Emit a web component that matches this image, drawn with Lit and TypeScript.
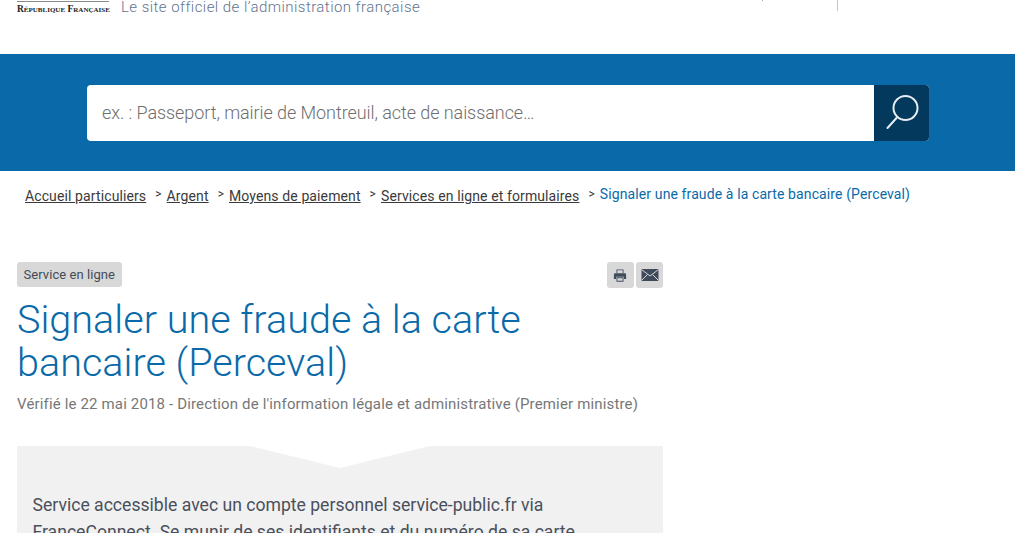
import { LitElement, html, css } from "lit";
import { customElement } from "lit/decorators.js";

@customElement("app-root")
export class AppRoot extends LitElement {
  static styles = css`
    :host {
      display: block;
      height: 533px;
      overflow: hidden;
      background: #fff;
      font-family: Roboto, "Liberation Sans", sans-serif;
    }
    .header {
      height: 54px;
      box-sizing: border-box;
      display: flex;
      padding-left: 17px;
      overflow: hidden;
    }
    .logo {
      width: 92px;
      height: 14px;
      border-top: 1px solid #8a8a8a;
      margin-top: 1px;
      font: 700 9.5px/14px "Liberation Serif", serif;
      font-variant: small-caps;
      color: #222;
      white-space: nowrap;
    }
    .tagline {
      margin-left: 12px;
      margin-top: -2px;
      font-weight: 300;
      font-size: 15px;
      line-height: 18px;
      letter-spacing: 0.45px;
      color: #62738f;
      white-space: nowrap;
    }
    .tick {
      position: absolute;
      left: 762px;
      top: 0;
      width: 1px;
      height: 1px;
      background: #a9a3cc;
    }
    .divider {
      position: absolute;
      left: 837px;
      top: 0;
      width: 1px;
      height: 11px;
      background: #c8c8c8;
    }
    .band {
      height: 117px;
      background: #0a6aa9;
      padding: 31px 86px 30px 87px;
      box-sizing: border-box;
    }
    .search {
      height: 56px;
      display: flex;
      background: #fff;
      border-radius: 4px;
      overflow: hidden;
    }
    .placeholder {
      flex: 1;
      padding-left: 15px;
      font-weight: 300;
      font-size: 18px;
      letter-spacing: -0.07px;
      line-height: 56px;
      color: #6e6e6e;
    }
    .go {
      width: 55px;
      background: #03395c;
      display: flex;
      align-items: center;
      justify-content: center;
    }
    .crumbs {
      display: flex;
      align-items: flex-start;
      padding: 15px 0 0 25px;
      height: 76px;
      box-sizing: border-box;
      font-size: 14px;
      letter-spacing: 0.11px;
      line-height: 20px;
      white-space: nowrap;
    }
    .crumbs a {
      color: #3a3a3a;
      text-decoration: underline;
    }
    .sep {
      font-size: 12px;
      color: #333;
      margin: -2px 5px 0 9px;
    }
    .current {
      color: #0a6aa9;
      margin-top: -2px;
    }
    .main {
      width: 646px;
      margin-left: 17px;
    }
    .top {
      display: flex;
      justify-content: space-between;
      align-items: flex-start;
      margin-top: 15px;
    }
    .tag {
      height: 25px;
      padding: 0 7px 0 6.5px;
      background: #d8d8d8;
      border-radius: 3px;
      font-size: 13px;
      letter-spacing: 0.06px;
      line-height: 25px;
      color: #444b57;
    }
    .actions {
      display: flex;
      gap: 2px;
    }
    .action {
      width: 27px;
      height: 26px;
      background: #d8d8d8;
      border-radius: 3px;
      display: flex;
      align-items: center;
      justify-content: center;
    }
    .print {
      box-sizing: border-box;
      padding-right: 1px;
    }
    h1 {
      margin: 10px 0 0;
      font-weight: 300;
      font-size: 39.6px;
      line-height: 43px;
      color: #0a6aa9;
      width: 560px;
    }
    .meta {
      margin-top: 10px;
      font-size: 15px;
      letter-spacing: 0.155px;
      line-height: 20px;
      color: #777;
      white-space: nowrap;
    }
    .box {
      position: relative;
      margin-top: 32px;
      height: 200px;
      background: #f1f1f1;
      padding: 46px 15px 0 15.5px;
      box-sizing: border-box;
      font-size: 17.6px;
      line-height: 27px;
      color: #4a505b;
    }
    .notch {
      position: absolute;
      left: 233px;
      top: 0;
    }
  `;

  render() {
    return html`
      <div class="header">
        <div class="logo">République Française</div>
        <div class="tagline">Le site officiel de l’administration française</div>
        <div class="tick"></div>
        <div class="divider"></div>
      </div>
      <div class="band">
        <div class="search">
          <div class="placeholder">ex. : Passeport, mairie de Montreuil, acte de naissance…</div>
          <div class="go">
            <svg width="34" height="36" viewBox="0 0 34 36" fill="none" stroke="#e6edf2" stroke-width="2" stroke-linecap="round">
              <circle cx="20.5" cy="13" r="12"></circle>
              <path d="M11.5 23 L2.5 33"></path>
            </svg>
          </div>
        </div>
      </div>
      <nav class="crumbs">
        <a>Accueil particuliers</a><span class="sep">&gt;</span>
        <a>Argent</a><span class="sep">&gt;</span>
        <a>Moyens de paiement</a><span class="sep">&gt;</span>
        <a>Services en ligne et formulaires</a><span class="sep">&gt;</span>
        <span class="current">Signaler une fraude à la carte bancaire (Perceval)</span>
      </nav>
      <div class="main">
        <div class="top">
          <div class="tag">Service en ligne</div>
          <div class="actions">
            <div class="action print">
              <svg width="14" height="15" viewBox="0 0 16 16" fill="#3f4a5c">
                <path d="M4 1h8v4H4z M5 2v3h6V2z" fill-rule="evenodd"></path>
                <path fill-rule="evenodd" d="M2.5 5.5h11A1.5 1.5 0 0 1 15 7v5h-2.5V9.5h-9V12H1V7a1.5 1.5 0 0 1 1.5-1.5z"></path>
                <path fill-rule="evenodd" d="M4 10h8v5H4z M5 11v3h6v-3z"></path>
              </svg>
            </div>
            <div class="action">
              <svg width="18" height="14" viewBox="0 0 18 14">
                <rect x="0.5" y="1" width="17" height="12" fill="#3f4a5c"></rect>
                <path d="M0.5 1.5 L9 8 L17.5 1.5 M0.5 12.5 L6.5 6.5 M17.5 12.5 L11.5 6.5" fill="none" stroke="#d8d8d8" stroke-width="1"></path>
              </svg>
            </div>
          </div>
        </div>
        <h1>Signaler une fraude à la carte bancaire (Perceval)</h1>
        <div class="meta">Vérifié le 22 mai 2018 - Direction de l'information légale et administrative (Premier ministre)</div>
        <div class="box">
          <svg class="notch" width="180" height="22" viewBox="0 0 180 22">
            <polygon points="0,0 180,0 90,22" fill="#fff"></polygon>
          </svg>
          Service accessible avec un compte personnel service-public.fr via FranceConnect. Se munir de ses identifiants et du numéro de sa carte bancaire.
        </div>
      </div>
    `;
  }
}
